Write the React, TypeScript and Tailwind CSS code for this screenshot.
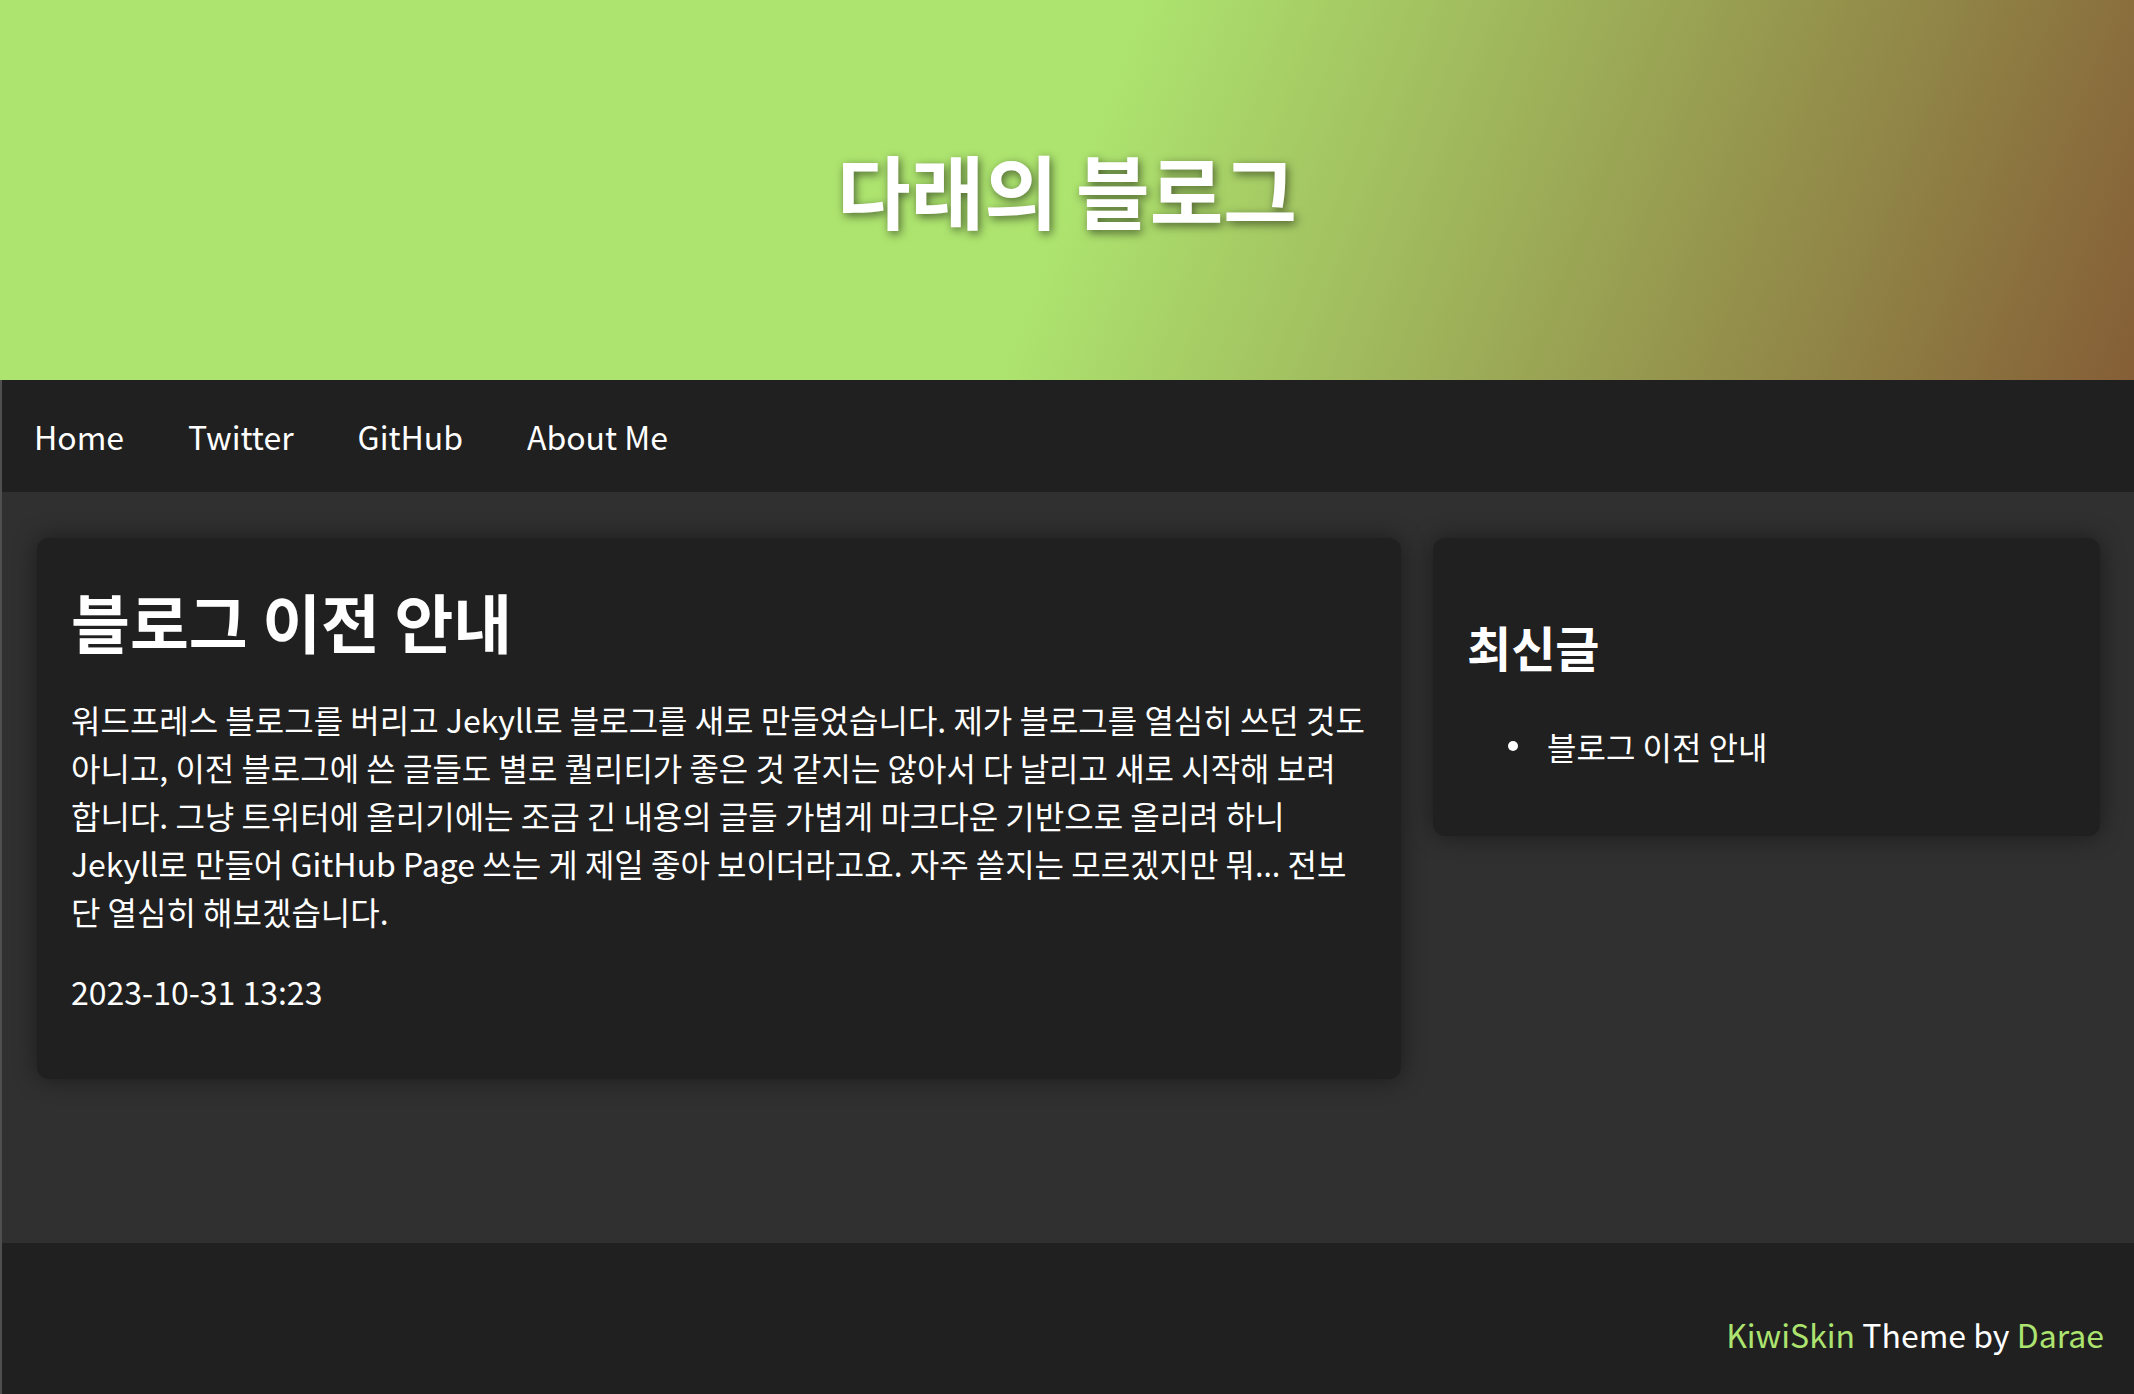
const font = { fontFamily: '"Noto Sans CJK KR", "Noto Sans", sans-serif' }

const navLinks = ['Home', 'Twitter', 'GitHub', 'About Me']

function Header() {
    return (
        <header className="h-[380px] flex items-center justify-center bg-[linear-gradient(111deg,#ade46f_50%,#855e36_100%)]">
            <h1 className="-mt-[4px] text-[80px] font-bold text-white leading-none [text-shadow:2px_3px_10px_rgba(0,0,0,0.55)]">
                다래의 블로그
            </h1>
        </header>
    )
}

function Nav() {
    return (
        <nav className="h-[112px] bg-[#202020] flex items-center">
            {navLinks.map((link) => (
                <a key={link} href="#" className="px-[32px] text-[32px] text-white">
                    {link}
                </a>
            ))}
        </nav>
    )
}

function PostCard() {
    return (
        <article className="bg-[#202020] rounded-[12px] shadow-[0_0_24px_rgba(0,0,0,0.45)] px-[34px] pt-[44px] pb-[64px]">
            <h2 className="text-[64px] font-bold text-white leading-[1.2]">블로그 이전 안내</h2>
            <p className="mt-[36px] text-[32px] leading-[48px] text-white">
                워드프레스 블로그를 버리고 Jekyll로 블로그를 새로 만들었습니다. 제가 블로그를 열심히 쓰던 것도 아니고, 이전 블로그에 쓴 글들도 별로 퀄리티가 좋은 것 같지는 않아서 다 날리고 새로 시작해 보려 합니다. 그냥 트위터에 올리기에는 조금 긴 내용의 글들 가볍게 마크다운 기반으로 올리려 하니 Jekyll로 만들어 GitHub Page 쓰는 게 제일 좋아 보이더라고요. 자주 쓸지는 모르겠지만 뭐<span className="font-['Noto_Sans'] leading-none">…</span> 전보단 열심히 해보겠습니다.
            </p>
            <p className="mt-[32px] text-[32px] leading-[48px] text-white">2023-10-31 13:23</p>
        </article>
    )
}

function Sidebar() {
    return (
        <aside className="bg-[#202020] rounded-[12px] shadow-[0_0_24px_rgba(0,0,0,0.45)] px-[34px] pt-[80px] pb-[66px] self-start">
            <h3 className="text-[48px] font-bold text-white leading-[1.2]">최신글</h3>
            <ul className="mt-[46px] text-[32px] leading-[48px] text-white">
                <li className="flex items-center pl-[41px]">
                    <span className="w-[10px] h-[10px] rounded-full bg-white" />
                    <a href="#" className="ml-[29px]">블로그 이전 안내</a>
                </li>
            </ul>
        </aside>
    )
}

export default function App() {
    return (
        <div className="min-h-screen flex flex-col bg-[#303030]" style={font}>
            <Header />
            <div className="flex-1 flex flex-col border-l-2 border-[#4f4f4f]">
                <Nav />
                <main className="flex-1 bg-[#303030] pl-[35px] pr-[34px] pt-[46px] grid grid-cols-[1364px_1fr] gap-[32px] items-start">
                    <PostCard />
                    <Sidebar />
                </main>
                <footer className="h-[151px] bg-[#202020] pt-[67px] pr-[30px] text-right text-[32px] leading-[48px] text-white">
                    <a href="#" className="text-[#ade46f]">KiwiSkin</a> Theme by <a href="#" className="text-[#ade46f]">Darae</a>
                </footer>
            </div>
        </div>
    )
}
